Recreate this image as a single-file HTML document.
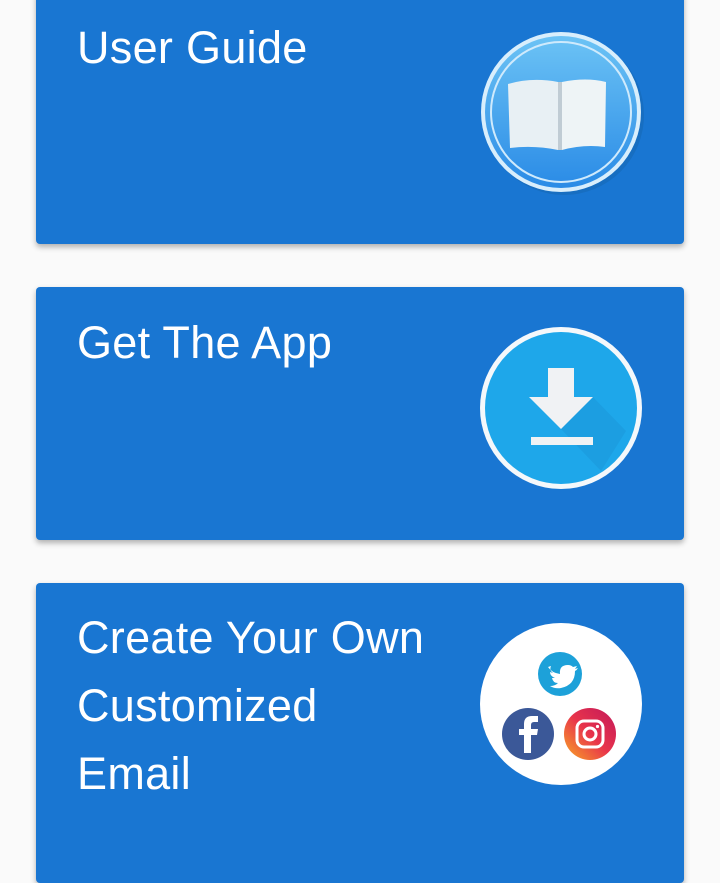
<!DOCTYPE html>
<html><head><meta charset="utf-8"><style>
html,body{margin:0;padding:0;width:720px;height:843px;overflow:hidden;background:#fafafa;}
.card{position:absolute;left:36px;width:648px;background:#1976d2;border-radius:4px;box-shadow:0 3px 6px rgba(0,0,0,.3);}
.t{position:absolute;left:77px;font-family:"Liberation Sans",sans-serif;font-size:45px;line-height:68px;color:#fff;font-weight:300;letter-spacing:0.3px;}
svg{position:absolute;}
</style></head><body>
<div class="card" style="top:-10px;height:254px"></div>
<div class="card" style="top:287px;height:253px"></div>
<div class="card" style="top:583px;height:300px"></div>
<div class="t" style="top:14px">User Guide</div>
<div class="t" style="top:309px">Get The App</div>
<div class="t" style="top:604px">Create Your Own<br>Customized<br>Email</div>

<svg style="left:476px;top:27px" width="170" height="170" viewBox="0 0 170 170">
<defs><linearGradient id="g1" x1="0" y1="0" x2="0" y2="1"><stop offset="0" stop-color="#6cc3f5"/><stop offset="1" stop-color="#2a8be6"/></linearGradient></defs>
<circle cx="88" cy="88" r="80" fill="#1565b0" opacity=".5"/>
<circle cx="85" cy="85" r="80" fill="#d8eefc"/>
<circle cx="85" cy="85" r="76" fill="url(#g1)"/>
<circle cx="85" cy="85" r="70" fill="none" stroke="#cfeafc" stroke-width="2"/>
<path d="M32 57 Q56 50 82 55 L82 123 Q58 118 34 121 Z" fill="#e8f0f4"/>
<path d="M86 55 Q110 50 130 55 L129 120 Q108 117 86 123 Z" fill="#eef4f6"/>
<path d="M82 55 L86 55 L86 123 L82 123Z" fill="#c0ccd4"/>
</svg>

<svg style="left:476px;top:323px" width="170" height="170" viewBox="0 0 170 170">
<circle cx="85" cy="85" r="81" fill="#f4f8fb"/>
<circle cx="85" cy="85" r="76" fill="#1ea7ea"/>
<path d="M98 45 L98 74 L117 74 L150 108 L125 148 L85 106 Z" fill="#1a8fd0" opacity=".35"/>
<path d="M72 45 L98 45 L98 74 L117 74 L85 106 L53 74 L72 74 Z" fill="#f0f2f4"/>
<rect x="55" y="114" width="62" height="8" fill="#f0f2f4"/>
</svg>

<svg style="left:480px;top:623px" width="162" height="162" viewBox="0 0 162 162">
<circle cx="81" cy="81" r="81" fill="#fff"/>
<circle cx="80" cy="51" r="22" fill="#1da1d9"/>
<path d="M68 44 q4 6 12 7 q-1-9 8-9 q3 0 5 2 l4-1 l-2 3 l3-1 q-1 2-3 3 q0 14-14 17 q-6 1-11-2 q5 0 8-3 q-5 0-6-5 h3 q-5-2-5-6 l3 1 q-4-3-2-7z" fill="#fff"/>
<circle cx="48" cy="111" r="26" fill="#3b5898"/>
<path d="M51 130 V112 h6 l1-6 h-7 v-4 q0-3 3-3 h4 v-6 h-6 q-8 0-8 8 v5 h-5 v6 h5 v18z" fill="#fff"/>
<defs><linearGradient id="ig" x1="0" y1="1" x2="1" y2="0"><stop offset="0" stop-color="#f9a825"/><stop offset=".5" stop-color="#e8344b"/><stop offset="1" stop-color="#c2185b"/></linearGradient></defs>
<circle cx="110" cy="111" r="26" fill="url(#ig)"/>
<rect x="97" y="98" width="26" height="26" rx="7" fill="none" stroke="#fff" stroke-width="3"/>
<circle cx="110" cy="111" r="6" fill="none" stroke="#fff" stroke-width="3"/>
<circle cx="117.5" cy="103.5" r="1.6" fill="#fff"/>
</svg>
</body></html>
